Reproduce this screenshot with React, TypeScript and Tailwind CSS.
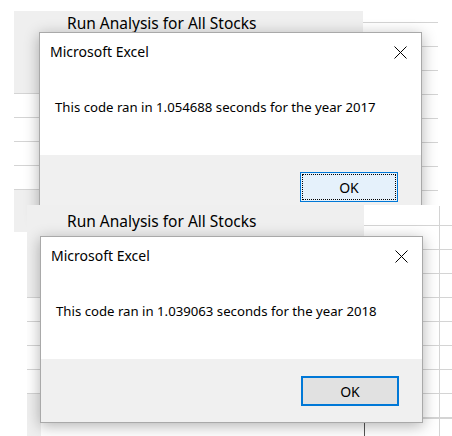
const ui = "font-['Noto_Sans','Open_Sans',sans-serif]";

function SheetRows({ first, count }: { first: number; count: number }) {
  return (
    <div className="flex flex-col">
      <div className="border-b border-[#d4d4d4]" style={{ height: first }} />
      {Array.from({ length: count }).map((_, i) => (
        <div key={i} className="h-[24px] border-b border-[#d4d4d4]" />
      ))}
    </div>
  );
}

function MessageBox({
  message,
  focused,
  className,
}: {
  message: string;
  focused: boolean;
  className: string;
}) {
  return (
    <div
      className={`absolute flex h-[187px] w-[383px] flex-col border border-[#a9a9a9] bg-white shadow-[0_3px_14px_rgba(0,0,0,0.3)] ${ui} ${className}`}
    >
      <div className="flex h-[122px] flex-col bg-white">
        <div className="flex items-start justify-between pl-[10px] pr-[14px] pt-[9px]">
          <span className="text-[14px] leading-[20px] text-black">Microsoft Excel</span>
          <svg width="13" height="13" viewBox="0 0 13 13" className="mt-[4px]">
            <path d="M0.5 0.5 L12.5 12.5 M12.5 0.5 L0.5 12.5" stroke="#000" strokeWidth="1" />
          </svg>
        </div>
        <p className="mt-[36px] pl-[15px] text-[13.2px] leading-[18px] text-black">{message}</p>
      </div>
      <div className="flex flex-1 justify-end bg-[#f0f0f0] pr-[23px] pt-[17px]">
        {focused ? (
          <div className="flex h-[30px] w-[98px] border border-[#0078d7] bg-[#e5f1fb] p-[1px]">
            <div className="flex flex-1 items-center justify-center border border-dotted border-black text-[14px] text-black">
              OK
            </div>
          </div>
        ) : (
          <div className="flex h-[30px] w-[98px] items-center justify-center border-2 border-[#0078d7] bg-[#e1e1e1] text-[14px] text-black">
            OK
          </div>
        )}
      </div>
    </div>
  );
}

export default function App() {
  return (
    <div className="flex h-[436px] w-[452px] flex-col overflow-hidden bg-white">
      {/* first capture: 2017 */}
      <div className="relative flex h-[232px] shrink-0 pl-[14px]">
        <div className="flex w-[349px] flex-col pt-[11px]">
          <div className={`h-[82px] bg-[#efefef] pl-[53px] pt-[1px] text-[15.5px] text-black ${ui}`}>
            Run Analysis for All Stocks
          </div>
          <div className="w-[26px]">
            <SheetRows first={0} count={4} />
          </div>
          <div className="w-[26px] flex-1 bg-[#efefef]" />
        </div>
        <div className="w-[75px]">
          <SheetRows first={23} count={7} />
        </div>
        <MessageBox
          className="left-[39px] top-[32px]"
          message="This code ran in 1.054688 seconds for the year 2017"
          focused
        />
      </div>

      {/* second capture: 2018 */}
      <div className="relative z-10 ml-[27px] mt-[-27px] flex flex-1 overflow-hidden bg-white">
        <div className="flex w-[337px] flex-col">
          <div className={`h-[92px] bg-[#efefef] pl-[40px] pt-[5px] text-[15.5px] text-black ${ui}`}>
            Run Analysis for All Stocks
          </div>
          <div className="w-[14px]">
            <SheetRows first={0} count={4} />
          </div>
          <div className="w-[14px] flex-1 bg-[#efefef]" />
        </div>
        <div className="flex w-[88px] flex-col pt-[1px]">
          <div className="flex h-[212px] overflow-hidden">
            <div className="w-[75px]">
              <SheetRows first={20} count={8} />
            </div>
            <div className="w-[13px] border-l border-[#d4d4d4]">
              <SheetRows first={20} count={8} />
            </div>
          </div>
          <div className="flex flex-1 border-l border-[#555]">
            <div className="w-[74px] border-t border-[#d4d4d4]" />
            <div className="w-[13px] border-l border-t border-[#d4d4d4]" />
          </div>
        </div>
        <MessageBox
          className="left-[13px] top-[31px]"
          message="This code ran in 1.039063 seconds for the year 2018"
          focused={false}
        />
      </div>
    </div>
  );
}
